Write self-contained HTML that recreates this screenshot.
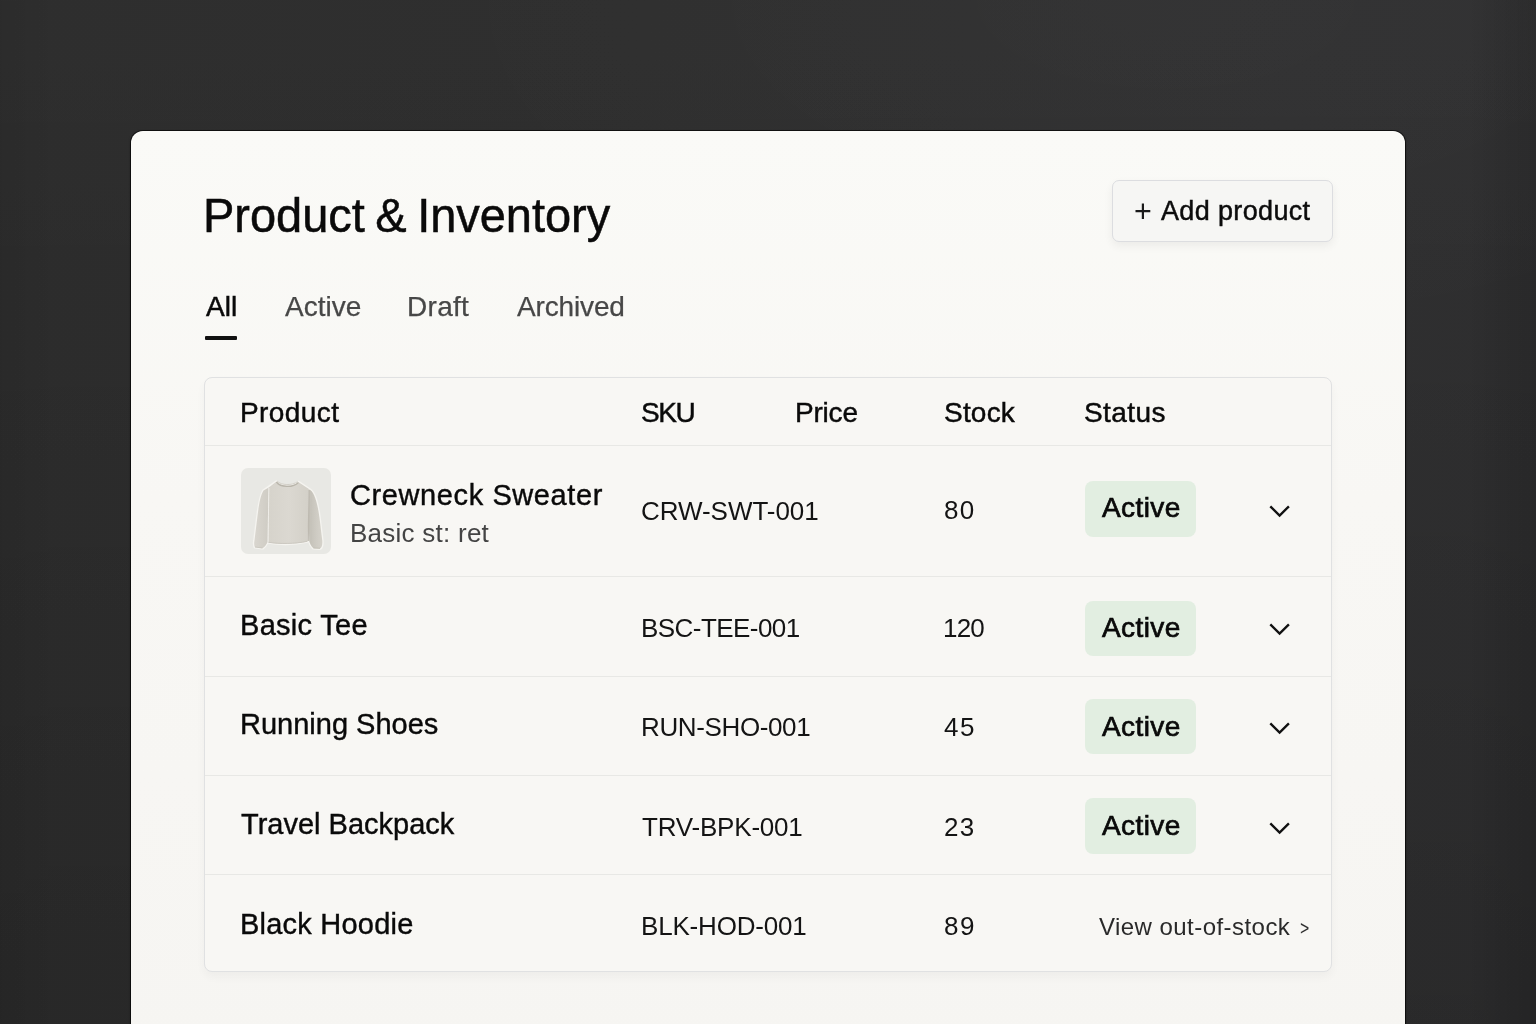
<!DOCTYPE html>
<html lang="en">
<head>
<meta charset="utf-8">
<title>Product &amp; Inventory</title>
<style>
*{box-sizing:border-box;margin:0;padding:0}
html,body{width:1536px;height:1024px;overflow:hidden}
body{
  font-family:"Liberation Sans",Arial,sans-serif;
  color:#0c0c0c;
  background:#2c2c2c;
  background-image:
    linear-gradient(to bottom, rgba(255,255,255,.012) 0%, rgba(0,0,0,0) 30%, rgba(0,0,0,.1) 100%),
    linear-gradient(to left, rgba(0,0,0,.13) 0px, rgba(0,0,0,0) 70px),
    linear-gradient(to right, rgba(0,0,0,.06) 0px, rgba(0,0,0,0) 60px),
    radial-gradient(ellipse 800px 380px at 76% 0%, rgba(255,255,255,.014) 0%, rgba(255,255,255,0) 100%),
    linear-gradient(95deg, #2c2c2c 0%, #2d2d2d 40%, #2f2f30 80%, #2e2e2f 100%);
  position:relative;
}
.abs{position:absolute;white-space:nowrap;line-height:1}
.abs,.btn span,.badge span{will-change:transform}
.card{
  position:absolute;left:130.5px;top:130.5px;width:1274px;height:920px;
  background:linear-gradient(180deg,#fafaf7 0%,#f8f7f4 40%,#f6f5f2 100%);border-radius:12px;
  box-shadow:0 0 0 1px rgba(0,0,0,.6), 0 1px 3px rgba(0,0,0,.5);
}
.title{left:203px;top:192.2px;font-size:47px;letter-spacing:-0.03px;word-spacing:-2.5px;transform:scaleY(1.037);transform-origin:0 39.8px;color:#0a0a0a;-webkit-text-stroke:.5px #0a0a0a}
.btn{
  position:absolute;left:1112px;top:180px;width:221px;height:62px;
  border:1px solid #dcdde0;border-radius:7px;background:#f6f6f4;
  box-shadow:0 4px 10px rgba(0,0,0,.06);
}
.btn span{position:absolute;line-height:1;white-space:nowrap}
.btn .pl{left:20.8px;top:14.6px;font-size:30.5px;color:#1a1a1a}
.btn .tx{left:47.5px;top:16.5px;font-size:27px;letter-spacing:.35px;-webkit-text-stroke:.45px #0a0a0a}
.tab{font-size:28px;color:#474747;top:292.8px;-webkit-text-stroke:.25px #474747}
.tab.on{color:#0a0a0a;-webkit-text-stroke:.5px #0a0a0a}
.ul{position:absolute;left:205px;top:336px;width:32px;height:4px;background:#111;border-radius:1px}
.table{
  position:absolute;left:204px;top:377px;width:1128px;height:595px;
  border:1px solid #e0e1e2;border-radius:8px;background:#f8f7f4;
  box-shadow:0 5px 10px rgba(0,0,0,.035);
}
.hr{position:absolute;left:205px;width:1126px;height:1px;background:#e8e8e5}
.th{font-size:28px;color:#0a0a0a;top:398.8px;-webkit-text-stroke:.45px #0a0a0a}
.name{font-size:29px;color:#0a0a0a;-webkit-text-stroke:.4px #0a0a0a}
.sub{font-size:26px;color:#444}
.sku{font-size:26px;color:#141414;left:641px}
.stock{font-size:26px;color:#141414;left:944px}
.badge{position:absolute;left:1085px;width:111px;height:55.6px;border-radius:8px;background:#e2eee1}
.badge span{position:absolute;left:16.6px;top:13.4px;letter-spacing:.42px;font-size:28px;line-height:1;color:#0a0a0a;-webkit-text-stroke:.7px #0a0a0a}
.chev{position:absolute;left:1268px;width:24px;height:16px}
.thumb{position:absolute;left:241px;top:468px;width:89.5px;height:86.4px;border-radius:7px;background:#e8e8e4;overflow:hidden}
.link{font-size:24px;color:#2a2a2a;left:1098.5px;top:915px;letter-spacing:.45px}
.gt{font-size:20px;color:#2a2a2a;left:1300px;top:918px;transform:scaleX(.78);transform-origin:0 0}
</style>
</head>
<body>
<div class="card"></div>

<div class="abs title">Product &amp; Inventory</div>
<div class="btn"><span class="pl">+</span><span class="tx">Add product</span></div>

<div class="abs tab on" style="left:206px">All</div>
<div class="abs tab" style="left:285px">Active</div>
<div class="abs tab" style="left:406.6px;letter-spacing:.3px">Draft</div>
<div class="abs tab" style="left:517.3px;letter-spacing:-.15px">Archived</div>
<div class="ul"></div>

<div class="table"></div>
<div class="hr" style="top:445.3px"></div>
<div class="hr" style="top:575.5px"></div>
<div class="hr" style="top:675.5px"></div>
<div class="hr" style="top:775.4px"></div>
<div class="hr" style="top:874px"></div>

<div class="abs th" style="left:240px;letter-spacing:.42px">Product</div>
<div class="abs th" style="left:640.5px;letter-spacing:-1.4px">SKU</div>
<div class="abs th" style="left:794.6px;letter-spacing:-.2px">Price</div>
<div class="abs th" style="left:943.6px;letter-spacing:.2px">Stock</div>
<div class="abs th" style="left:1083.6px;letter-spacing:.4px">Status</div>

<!-- row 1 -->
<div class="thumb">
<svg width="90" height="87" viewBox="0 0 90 87">
  <defs>
    <filter id="sf" x="-10%" y="-10%" width="120%" height="120%"><feGaussianBlur stdDeviation=".45"/></filter>
    <linearGradient id="bd" x1="0" y1="0" x2="1" y2="0"><stop offset="0" stop-color="#d6d3cb"/><stop offset=".5" stop-color="#dbd8d1"/><stop offset="1" stop-color="#d3d0c8"/></linearGradient>
    <linearGradient id="rs" x1="0" y1="0" x2="1" y2="0"><stop offset="0" stop-color="#c3c0b7"/><stop offset=".6" stop-color="#cfccc4"/><stop offset="1" stop-color="#d5d2ca"/></linearGradient>
    <linearGradient id="ls" x1="0" y1="0" x2="1" y2="0"><stop offset="0" stop-color="#d9d6cf"/><stop offset="1" stop-color="#cfccc4"/></linearGradient>
  </defs>
  <g filter="url(#sf)">
    <path d="M35.2 13.7 C39 18.5 52 19 57.6 14.2 L68.8 21.5 C74 25 77 38 78.5 50 L81.3 73 C81.6 77 80.5 80 79 80.6 L72.3 80.3 C70 78 68.6 75 68.2 72.5 L66.4 73.4 C54 76.2 38 76.2 27.3 74.4 L26.4 74.4 C25 77 23.5 79 21.5 80.3 L13.9 79.3 C13 77 13 75 13.5 72.3 L16.5 48 C18 36 19.5 27 22.5 22.5 Z" fill="#f5f4f0" stroke="#f5f4f0" stroke-width="2.6" stroke-linejoin="round"/>
    <path d="M22.5 22.5 C19.5 27 18 36 16.5 48 L13.5 72.3 C13 75 13 77 13.9 79.3 L21.5 80.3 C23.5 79 25 77 26.4 74.4 C26.8 58 27 38 27.8 19.5 Z" fill="url(#ls)"/>
    <path d="M68.8 21.5 C74 25 77 38 78.5 50 L81.3 73 C81.6 77 80.5 80 79 80.6 L72.3 80.3 C70 78 68.6 75 68.2 72.5 C67.6 56 67.6 38 67.9 22 Z" fill="url(#rs)"/>
    <path d="M35.2 13.7 C39 18.5 52 19 57.6 14.2 L67.9 21 C67.3 38 67.2 56 66.6 73.4 C54 76.2 38 76.2 27.2 74.4 C27.3 58 27.4 38 27.8 19.5 Z" fill="url(#bd)"/>
    <path d="M27.9 20 C27.5 38 27.4 58 27.1 74" stroke="#efede8" stroke-width="1" fill="none"/>
    <path d="M26.6 22 C26.3 40 26.2 58 26 74" stroke="#cfccc4" stroke-width=".7" fill="none" opacity=".7"/>
    <path d="M68.1 22 C67.7 38 67.6 56 67.2 73" stroke="#bebab1" stroke-width="1.3" fill="none"/>
    <path d="M69.6 23 C70.2 40 70.2 58 69.6 74" stroke="#c6c3bb" stroke-width="1.6" fill="none" opacity=".6"/>
    <path d="M35.4 14 C39.5 19.6 52 20.1 57.4 14.5" stroke="#b9b5ab" stroke-width="1.3" fill="none"/>
    <path d="M36.2 13.2 C40 17.4 51.6 17.8 56.6 13.6" stroke="#cfccc4" stroke-width=".9" fill="none"/>
    <path d="M27.5 74.3 C38 76 54 76 66.3 73.3" stroke="#c8c5bd" stroke-width=".9" fill="none"/>
    <path d="M14 79 L21.4 80" stroke="#c8c5bd" stroke-width=".8" fill="none"/>
    <path d="M72.5 80 L79 80.3" stroke="#bfbcb3" stroke-width=".8" fill="none"/>
  </g>

</svg>
</div>
<div class="abs name" style="left:350.3px;top:481.4px;letter-spacing:.6px">Crewneck Sweater</div>
<div class="abs sub" style="left:350px;top:520.3px;letter-spacing:.25px">Basic st: ret</div>
<div class="abs sku" style="top:497.7px;letter-spacing:-.05px">CRW-SWT-001</div>
<div class="abs stock" style="top:497px;left:944px;letter-spacing:1.2px">80</div>
<div class="badge" style="top:480.8px;height:56.6px"><span>Active</span></div>
<svg class="chev" style="top:503px" viewBox="0 0 24 16"><path d="M2.3 3.3 L11.6 12.6 L20.9 3.3" fill="none" stroke="#111" stroke-width="2.35" stroke-linecap="butt" stroke-linejoin="miter"/></svg>

<!-- row 2 -->
<div class="abs name" style="left:240.4px;top:610.8px;letter-spacing:.3px">Basic Tee</div>
<div class="abs sku" style="top:614.7px;left:641.3px;letter-spacing:-.55px">BSC-TEE-001</div>
<div class="abs stock" style="top:615px;left:943px;letter-spacing:-.8px">120</div>
<div class="badge" style="top:600.8px;height:55px"><span>Active</span></div>
<svg class="chev" style="top:621px" viewBox="0 0 24 16"><path d="M2.3 3.3 L11.6 12.6 L20.9 3.3" fill="none" stroke="#111" stroke-width="2.35" stroke-linecap="butt" stroke-linejoin="miter"/></svg>

<!-- row 3 -->
<div class="abs name" style="left:240.2px;top:710.2px;letter-spacing:0px">Running Shoes</div>
<div class="abs sku" style="top:713.8px;left:641.3px;letter-spacing:-.37px">RUN-SHO-001</div>
<div class="abs stock" style="top:714px;left:944px;letter-spacing:1.6px">45</div>
<div class="badge" style="top:699.3px;height:55.2px"><span>Active</span></div>
<svg class="chev" style="top:720.4px" viewBox="0 0 24 16"><path d="M2.3 3.3 L11.6 12.6 L20.9 3.3" fill="none" stroke="#111" stroke-width="2.35" stroke-linecap="butt" stroke-linejoin="miter"/></svg>

<!-- row 4 -->
<div class="abs name" style="left:241px;top:810.2px;letter-spacing:0px">Travel Backpack</div>
<div class="abs sku" style="top:813.8px;left:641.5px;letter-spacing:-.2px">TRV-BPK-001</div>
<div class="abs stock" style="top:814px;left:944px;letter-spacing:1.4px">23</div>
<div class="badge" style="top:798.4px;height:56px"><span>Active</span></div>
<svg class="chev" style="top:820px" viewBox="0 0 24 16"><path d="M2.3 3.3 L11.6 12.6 L20.9 3.3" fill="none" stroke="#111" stroke-width="2.35" stroke-linecap="butt" stroke-linejoin="miter"/></svg>

<!-- row 5 -->
<div class="abs name" style="left:240.4px;top:909.7px;letter-spacing:.22px">Black Hoodie</div>
<div class="abs sku" style="top:912.7px;left:641.3px;letter-spacing:-.18px">BLK-HOD-001</div>
<div class="abs stock" style="top:913px;left:944px;letter-spacing:1.6px">89</div>
<div class="abs link">View out-of-stock</div>
<div class="abs gt">&gt;</div>
</body>
</html>
